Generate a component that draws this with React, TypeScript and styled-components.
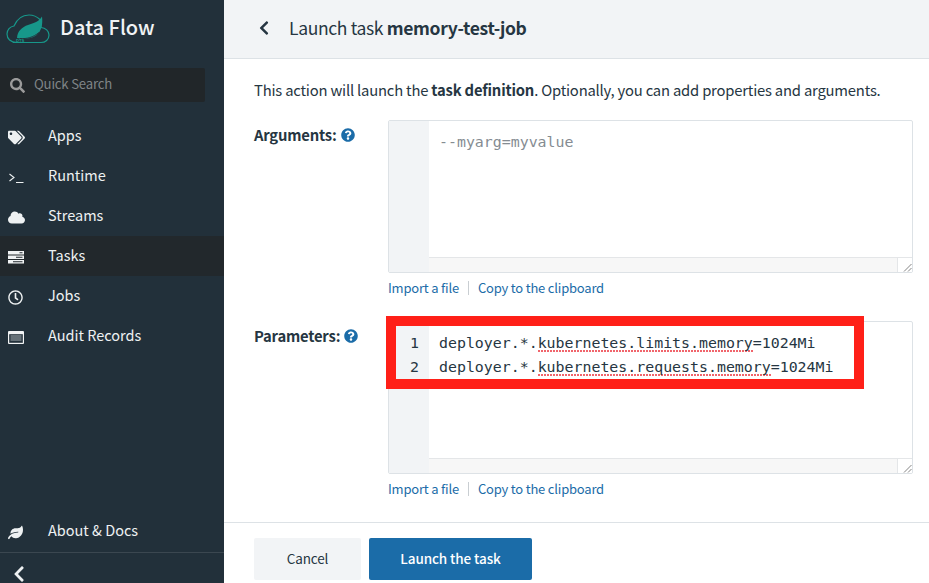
import React from "react";
import styled, { createGlobalStyle } from "styled-components";
import {
  FaTags,
  FaCloud,
  FaRegClock,
  FaLeaf,
  FaChevronLeft,
  FaSearch,
  FaQuestionCircle,
} from "react-icons/fa";

const Global = createGlobalStyle`
  html, body { margin: 0; padding: 0; background: #fff; }
  body { font-family: "Noto Sans CJK SC", "Noto Sans", sans-serif; color: #263642; }
  * { box-sizing: border-box; }
`;

const Page = styled.div`
  display: flex;
  width: 929px;
  height: 583px;
  overflow: hidden;
`;

const Sidebar = styled.aside`
  width: 224px;
  flex: none;
  background: #22303a;
  display: flex;
  flex-direction: column;
  color: #f1f3f4;
`;

const Brand = styled.div`
  height: 68px;
  display: flex;
  align-items: center;
  padding: 0 0 11px 6px;
  gap: 10px;
  font-size: 20px;
  font-weight: 500;
  color: #f0f3f4;
`;

const BrandName = styled.span`
  margin-bottom: 4px;
`;

const SearchBox = styled.div`
  width: 205px;
  height: 34px;
  background: #212629;
  border-radius: 0 2px 2px 0;
  display: flex;
  align-items: center;
  padding-left: 10px;
  gap: 9px;
  color: #7f8487;
  font-size: 13.2px;
  letter-spacing: -0.2px;
  margin-bottom: 14px;
  svg {
    color: #9b9b9b;
  }
`;

const SearchText = styled.span`
  margin-bottom: 3px;
`;

const Nav = styled.nav`
  display: flex;
  flex-direction: column;
`;

const NavItem = styled.div<{ $active?: boolean }>`
  height: 40px;
  flex: none;
  display: flex;
  align-items: center;
  font-size: 14.5px;
  background: ${(p) => (p.$active ? "#22282c" : "transparent")};
  color: #eef1f2;
`;

const AboutItem = styled(NavItem)`
  padding-bottom: 2px;
`;

const NavLabel = styled.span`
  margin-bottom: 3px;
`;

const NavIcon = styled.span`
  width: 48px;
  padding-left: 8px;
  flex: none;
  height: 18px;
  display: flex;
  align-items: center;
  font-size: 16px;
  color: #eef1f2;
  position: relative;
  top: 1px;
`;

const Spacer = styled.div`
  flex: 1;
`;

const SideBottom = styled.div`
  height: 31px;
  flex: none;
  border-top: 1px solid #3b4750;
  display: flex;
  align-items: center;
  padding: 11px 0 0 10px;
  font-size: 18px;
  color: #eef1f2;
`;

const Main = styled.main`
  flex: 1;
  display: flex;
  flex-direction: column;
  min-width: 0;
`;

const Header = styled.header`
  height: 59px;
  flex: none;
  background: #f2f4f6;
  border-bottom: 1px solid #dde2e6;
  display: flex;
  align-items: center;
  padding: 0 0 2px 32px;
  gap: 17px;
  font-size: 17.5px;
  letter-spacing: -0.35px;
  color: #263642;
`;

const Back = styled.span`
  display: flex;
  font-size: 16px;
  color: #263642;
`;

const Title = styled.span`
  margin-bottom: 2px;
`;

const Content = styled.div`
  flex: 1;
  padding: 21px 16px 0 30px;
  position: relative;
`;

const Intro = styled.p`
  margin: 0;
  height: 40px;
  font-size: 14.8px;
  letter-spacing: -0.2px;
  line-height: 20px;
  white-space: nowrap;
`;

const FormRow = styled.div`
  display: flex;
  height: 201px;
`;

const Label = styled.label`
  width: 134px;
  flex: none;
  padding-top: 5px;
  font-size: 14.8px;
  letter-spacing: -0.2px;
  line-height: 20px;
  font-weight: 700;
  display: block;
  svg {
    color: #1b6ca8;
    font-size: 14px;
    vertical-align: -1px;
    margin-left: 1px;
  }
`;

const Field = styled.div`
  width: 525px;
`;

const Editor = styled.div`
  height: 153px;
  border: 1px solid #dde2e6;
  border-radius: 2px;
  display: flex;
  overflow: hidden;
`;

const Gutter = styled.div`
  width: 40px;
  flex: none;
  background: #f2f4f6;
  padding: 9px 10px 0 0;
  font-family: "DejaVu Sans Mono", monospace;
  font-size: 14.9px;
  line-height: 24px;
  text-align: right;
  color: #263642;
`;

const EditorBody = styled.div`
  flex: 1;
  display: flex;
  flex-direction: column;
  min-width: 0;
`;

const Code = styled.div<{ $placeholder?: boolean }>`
  flex: 1;
  padding: 9px 0 0 10px;
  font-family: "DejaVu Sans Mono", monospace;
  font-size: 14.9px;
  line-height: 24px;
  white-space: pre;
  color: ${(p) => (p.$placeholder ? "#858c92" : "#263642")};
`;

const Spell = styled.span`
  background-image: radial-gradient(circle at 1px 1px, #f0656c 0.8px, transparent 1.1px);
  background-size: 3px 3px;
  background-repeat: repeat-x;
  background-position: 0 100%;
  padding-bottom: 1px;
`;

const ScrollBar = styled.div`
  height: 15px;
  flex: none;
  background: #f7f7f7;
  border-top: 1px solid #e4e6e8;
  display: flex;
  justify-content: flex-end;
`;

const Resize = styled.div`
  width: 15px;
  background: #fff;
  border-left: 1px solid #e4e6e8;
  display: flex;
  align-items: flex-end;
  justify-content: flex-end;
`;

const Links = styled.div`
  display: flex;
  align-items: center;
  margin-top: 6px;
  font-size: 13px;
  letter-spacing: -0.2px;
  line-height: 18px;
  color: #1b6ca8;
`;

const Sep = styled.span`
  width: 1px;
  height: 14px;
  background: #c9ced2;
  margin: 0 9px;
`;

const Footer = styled.footer`
  height: 61px;
  flex: none;
  border-top: 1px solid #dde2e6;
  padding: 15px 0 0 30px;
  display: flex;
  gap: 8px;
`;

const Button = styled.button<{ $primary?: boolean }>`
  height: 42px;
  width: ${(p) => (p.$primary ? "163px" : "107px")};
  border: 0;
  border-radius: 2px;
  padding: 0 0 3px;
  font-family: inherit;
  font-size: 13.5px;
  letter-spacing: -0.1px;
  font-weight: ${(p) => (p.$primary ? 500 : 400)};
  background: ${(p) => (p.$primary ? "#1b6ca8" : "#f2f4f6")};
  color: ${(p) => (p.$primary ? "#fff" : "#263642")};
`;

const Highlight = styled.div`
  position: absolute;
  left: 162px;
  top: 257px;
  width: 478px;
  height: 73px;
  border: 10px solid #ff2018;
  pointer-events: none;
`;

const Bold = styled.b`
  font-weight: 700;
`;

const Logo = () => (
  <svg width="44" height="30" viewBox="0 0 44 30" fill="none">
    <path
      d="M11 28.500C4.500 28.500 1 24.500 1 20c0-4 3-7.500 7-8C11 5 16.500 1 23 1c4 0 8 1.600 11 4.500 .8 3 1 5.500 1 8 4.500 .4 8 3.300 8 7.500 0 4.500-3.500 7.500-8 7.500Z"
      stroke="#17978a"
      strokeWidth="1.200"
    />
    <path
      d="M11 24c.5-7 5-11 11-13 6-1.800 11-3.500 14-8.500 1 8-.5 15-6 19-5 3.300-12 4-19 2.500Z"
      fill="#17978a"
    />
    <path d="M14 24.500c7 .5 13-1 19-6" stroke="#22303a" strokeWidth="0.900" />
    <text x="10" y="27.500" fontSize="4.200" fontFamily="Liberation Sans" fill="#17978a" fontWeight="700">
      DTS
    </text>
  </svg>
);

const Prompt = () => (
  <svg width="16" height="13" viewBox="0 0 16 13" fill="none" stroke="#eef1f2" strokeWidth="1.100">
    <path d="M1.500 3 6 6.500 1.500 10M8 11.500h7.500" />
  </svg>
);

const TasksIcon = () => (
  <svg width="16" height="13" viewBox="0 0 16 13">
    <path fill="#f1f3f4" d="M0 0h16v3.500H0zM0 4.500h16V8H0zM0 9h16v3.500H0z" />
    <path fill="#22282c" d="M11.500 1.300h3v1h-3zM8 5.700h6.500v1H8zM5 10.200h9.500v1H5z" />
  </svg>
);

const AuditIcon = () => (
  <svg width="16" height="13" viewBox="0 0 16 13">
    <rect x="0" y="0" width="16" height="13" rx="1" fill="#f1f3f4" />
    <rect x="1.200" y="3.200" width="13.600" height="8.600" fill="#22303a" />
    <path fill="#aab1b6" d="M2.500 4.500h11v1h-11zM2.500 6.500h11v1h-11zM2.500 8.500h11v1h-11z" />
  </svg>
);

const Grip = () => (
  <svg width="10" height="10" viewBox="0 0 10 10" stroke="#666" strokeWidth="0.800">
    <path d="M2 9.500 9.500 2M6 9.500 9.500 6" />
  </svg>
);

const Bar = () => (
  <ScrollBar>
    <Resize>
      <Grip />
    </Resize>
  </ScrollBar>
);

const FileLinks = () => (
  <Links>
    <span>Import a file</span>
    <Sep />
    <span>Copy to the clipboard</span>
  </Links>
);

const items = [
  { label: "Apps", icon: <FaTags size={17} /> },
  { label: "Runtime", icon: <Prompt /> },
  { label: "Streams", icon: <FaCloud size={17} /> },
  { label: "Tasks", icon: <TasksIcon />, active: true },
  { label: "Jobs", icon: <FaRegClock size={15} /> },
  { label: "Audit Records", icon: <AuditIcon /> },
];

export default function App() {
  return (
    <Page>
      <Global />
      <Sidebar>
        <Brand>
          <Logo />
          <BrandName>Data Flow</BrandName>
        </Brand>
        <SearchBox>
          <FaSearch size={15} />
          <SearchText>Quick Search</SearchText>
        </SearchBox>
        <Nav>
          {items.map((it) => (
            <NavItem key={it.label} $active={it.active}>
              <NavIcon>{it.icon}</NavIcon>
              <NavLabel>{it.label}</NavLabel>
            </NavItem>
          ))}
        </Nav>
        <Spacer />
        <AboutItem>
          <NavIcon>
            <FaLeaf size={15} />
          </NavIcon>
          <NavLabel>About &amp; Docs</NavLabel>
        </AboutItem>
        <SideBottom>
          <FaChevronLeft />
        </SideBottom>
      </Sidebar>
      <Main>
        <Header>
          <Back>
            <FaChevronLeft />
          </Back>
          <Title>
            Launch task <Bold>memory-test-job</Bold>
          </Title>
        </Header>
        <Content>
          <Intro>
            This action will launch the <Bold>task definition</Bold>. Optionally, you can add
            properties and arguments.
          </Intro>
          <FormRow>
            <Label>
              Arguments: <FaQuestionCircle />
            </Label>
            <Field>
              <Editor>
                <Gutter />
                <EditorBody>
                  <Code $placeholder>--myarg=myvalue</Code>
                  <Bar />
                </EditorBody>
              </Editor>
              <FileLinks />
            </Field>
          </FormRow>
          <FormRow>
            <Label>
              Parameters: <FaQuestionCircle />
            </Label>
            <Field>
              <Editor>
                <Gutter>
                  1
                  <br />2
                </Gutter>
                <EditorBody>
                  <Code>
                    deployer.*.<Spell>kubernetes.limits.memory</Spell>=1024Mi
                    {"\n"}
                    deployer.*.<Spell>kubernetes.requests.memory</Spell>=1024Mi
                  </Code>
                  <Bar />
                </EditorBody>
              </Editor>
              <FileLinks />
            </Field>
          </FormRow>
          <Highlight />
        </Content>
        <Footer>
          <Button>Cancel</Button>
          <Button $primary>Launch the task</Button>
        </Footer>
      </Main>
    </Page>
  );
}
